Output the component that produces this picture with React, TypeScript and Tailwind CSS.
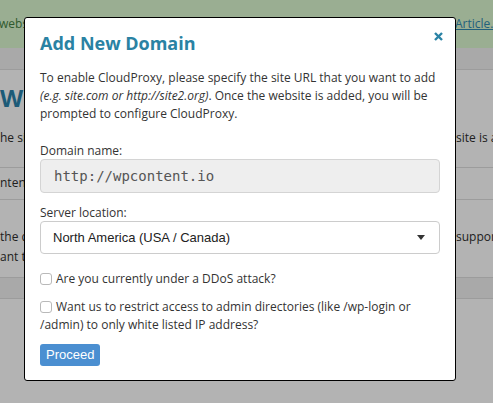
import React from "react";

const sans = { fontFamily: '"Open Sans", "Noto Sans", sans-serif' };

function BgRow({ left, right, className = "" }: { left: string; right?: string; className?: string }) {
  return (
    <div className={"flex w-full overflow-hidden whitespace-nowrap " + className}>
      <div className="w-[456px] shrink-0 overflow-hidden">{left}</div>
      {right ? <div className="shrink-0">{right}</div> : null}
    </div>
  );
}

export default function App() {
  return (
    <div
      className="relative w-[493px] h-[403px] overflow-hidden bg-[#b3b3b3] text-[12px] text-[#202020]"
      style={sans}
    >
      {/* background page (dimmed by backdrop) */}
      <div className="flex flex-col w-full">
        <div className="h-[48px] bg-[#9aae92] flex items-center whitespace-nowrap overflow-hidden text-[#2f5a2f]">
          <div className="w-[456px] shrink-0 -ml-[1px]">website is protected. Read more</div>
          <div className="shrink-0 underline text-[#22607c]">Article.</div>
        </div>
        <div className="h-[22px] bg-[#a9a9a9] border-b border-[#9c9c9c]" />
        <div className="flex flex-col pt-[12px] pb-[20px] border-b border-[#9c9c9c]">
          <div className="text-[24px] leading-[32px] font-bold text-[#1d5b78]">Websites</div>
          <BgRow className="mt-[15px] leading-[18px]" left="he site you want to add" right="site is a" />
        </div>
        <div className="h-[32px] pt-[6px] leading-[18px] border-b border-[#9c9c9c]">
          <BgRow left="ntent.io" />
        </div>
        <div className="flex flex-col pt-[27px] pb-[10px] leading-[20px] border-b border-[#9c9c9c]">
          <BgRow left="the domain to the" right="suppor" />
          <BgRow left="ant to" />
        </div>
        <div className="h-[21px] bg-[#a9a9a9] border-b border-[#9c9c9c]" />
      </div>

      {/* modal */}
      <div className="absolute left-[24px] top-[17px] w-[432px] h-[364px] bg-white border border-black rounded-[3px] px-[15px] pt-[11px]">
        <button className="absolute right-[12px] top-[14px] w-[9px] h-[9px]" aria-label="Close">
          <svg width="9" height="9" viewBox="0 0 9 9">
            <path d="M1 1 L8 8 M8 1 L1 8" stroke="#2a83a5" strokeWidth="2.4" strokeLinecap="butt" />
          </svg>
        </button>
        <h2 className="text-[18px] leading-[28px] font-bold text-[#2a82a3]">Add New Domain</h2>
        <p className="mt-[12px] leading-[18px] text-[12px] text-[#333]">
          To enable CloudProxy, please specify the site URL that you want to add{" "}
          <em>(e.g. site.com or http://site2.org)</em>. Once the website is added, you will be prompted to
          configure CloudProxy.
        </p>
        <div className="mt-[20px] leading-[16px] text-[12px] text-[#333]">Domain name:</div>
        <div
          className="mt-0 h-[34px] w-[400px] rounded-[4px] border border-[#d4d4d4] bg-[#eeeeee] flex items-center pl-[13px] text-[14px] text-[#555]"
          style={{ fontFamily: '"DejaVu Sans Mono", "Liberation Mono", monospace' }}
        >
          http://wpcontent.io
        </div>
        <div className="mt-[12px] leading-[16px] text-[12px] text-[#333]">Server location:</div>
        <div className="h-[33px] w-[400px] rounded-[4px] border border-[#cccccc] bg-white flex items-center justify-between pl-[12px] pr-[14px]">
          <span
            className="text-[13px] text-[#222]"
            style={{ fontFamily: '"Liberation Sans", Arial, sans-serif' }}
          >
            North America (USA / Canada)
          </span>
          <svg width="8" height="5" viewBox="0 0 8 5">
            <path d="M0 0 L8 0 L4 5 Z" fill="#333" />
          </svg>
        </div>
        <label className="mt-[16px] flex items-center leading-[18px] text-[12px] text-[#333]">
          <span className="inline-block w-[12px] h-[12px] mr-[4px] rounded-[3px] border border-[#b9b9b9] bg-white shrink-0" />
          Are you currently under a DDoS attack?
        </label>
        <div className="mt-[10px] leading-[18px] text-[12px] text-[#333]">
          <span className="inline-block align-[-2px] w-[12px] h-[12px] mr-[4px] rounded-[3px] border border-[#b9b9b9] bg-white" />
          Want us to restrict access to admin directories (like /wp-login or /admin) to only white listed IP address?
        </div>
        <button
          className="mt-[10px] h-[22px] px-[6px] rounded-[3px] bg-[#4b8fd1] text-white text-[13px] leading-[22px]"
          style={{ fontFamily: '"Liberation Sans", Arial, sans-serif' }}
        >
          Proceed
        </button>
      </div>
    </div>
  );
}
